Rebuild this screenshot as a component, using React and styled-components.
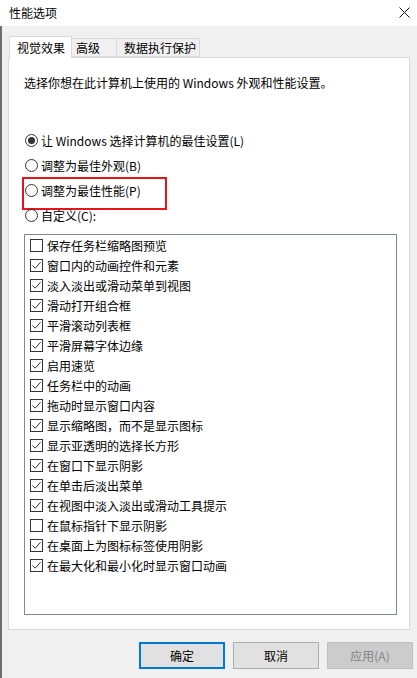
import React from "react"
import styled, { createGlobalStyle, css } from "styled-components"

const GlobalStyle = createGlobalStyle`
  html, body {
    margin: 0;
    padding: 0;
    background: #f0f0f0;
  }
  body {
    font-family: "Noto Sans CJK SC", "Noto Sans", sans-serif;
    font-size: 12px;
    color: #000;
  }
  * {
    box-sizing: border-box;
  }
`

const Window = styled.div`
  width: 417px;
  height: 678px;
  display: flex;
  flex-direction: column;
  background: #f0f0f0;
  overflow: hidden;
`

const TitleBar = styled.div`
  height: 26px;
  flex: none;
  background: #fff;
  display: flex;
  align-items: center;
  justify-content: space-between;
  padding: 0 7px 2px 9px;
  font-size: 12px;
`

const Body = styled.div`
  flex: 1;
  border-left: 2px solid #6e6e6e;
  padding: 10px 0 0 6px;
  display: flex;
  flex-direction: column;
`

const TabStrip = styled.div`
  display: flex;
  align-items: flex-end;
  height: 21px;
  padding-left: 1px;
  position: relative;
  z-index: 1;
`

const Tab = styled.div`
  height: ${(p) => (p.$active ? "22px" : "19px")};
  width: ${(p) => p.$width}px;
  margin-bottom: ${(p) => (p.$active ? "-1px" : "0")};
  display: flex;
  align-items: center;
  padding-left: ${(p) => p.$pad}px;
  padding-bottom: 1px;
  border: 1px solid #d9d9d9;
  border-bottom: ${(p) => (p.$active ? "none" : "1px solid #d9d9d9")};
  border-left: ${(p) => (p.$first ? "1px solid #d9d9d9" : "none")};
  background: ${(p) => (p.$active ? "#fff" : "#f0f0f0")};
  font-size: 12px;
  white-space: nowrap;
`

const Panel = styled.div`
  width: 402px;
  height: 573px;
  background: #fff;
  border: 1px solid #d9d9d9;
  padding: 16px 0 0 15px;
  display: flex;
  flex-direction: column;
`

const Intro = styled.p`
  margin: 0;
  line-height: 17px;
`

const RadioGroup = styled.div`
  margin-top: 37px;
  display: flex;
  flex-direction: column;
`

const RadioRow = styled.label`
  position: relative;
  height: 25px;
  display: flex;
  align-items: center;
  gap: 3px;
  padding-left: 1px;
  ${(p) =>
    p.$highlight &&
    css`
      &::after {
        content: "";
        position: absolute;
        left: -2px;
        top: -1px;
        width: 141px;
        height: 29px;
        border: 2px solid #e8141b;
        pointer-events: none;
      }
    `}
`

const RadioDot = styled.span`
  width: 13px;
  height: 13px;
  border-radius: 50%;
  border: 1px solid #333;
  display: flex;
  align-items: center;
  justify-content: center;
  flex: none;
  &::after {
    content: "";
    width: 7px;
    height: 7px;
    border-radius: 50%;
    background: ${(p) => (p.$checked ? "#333" : "transparent")};
  }
`

const ListBox = styled.div`
  margin-top: 6px;
  width: 373px;
  height: 381px;
  border: 1px solid #828790;
  padding: 0 0 0 5px;
  display: flex;
  flex-direction: column;
`

const CheckRow = styled.label`
  height: 20px;
  display: flex;
  align-items: center;
  gap: 4px;
`

const CheckBoxMark = styled.span`
  width: 13px;
  height: 13px;
  border: 1px solid #333;
  background: #fff;
  flex: none;
  display: flex;
  align-items: center;
  justify-content: center;
`

const ButtonRow = styled.div`
  display: flex;
  justify-content: flex-end;
  gap: 8px;
  padding-right: 4px;
  margin-top: 12px;
`

const Button = styled.button`
  width: 86px;
  height: 27px;
  font-family: inherit;
  font-size: 12px;
  padding: 0;
  background: ${(p) => (p.$disabled ? "#cccccc" : "#e1e1e1")};
  color: ${(p) => (p.$disabled ? "#838383" : "#000")};
  border: ${(p) =>
    p.$default ? "2px solid #0078d7" : p.$disabled ? "1px solid #bfbfbf" : "1px solid #adadad"};
`

const CloseIcon = () => (
  <svg width="11" height="11" viewBox="0 0 11 11">
    <path d="M0.5 0.5 L10.5 10.5 M10.5 0.5 L0.5 10.5" stroke="#111" strokeWidth="1" fill="none" />
  </svg>
)

const Check = () => (
  <svg width="11" height="11" viewBox="0 0 11 11">
    <path d="M1.5 5.5 L4.2 8.2 L9.6 2.2" stroke="#333" strokeWidth="1" fill="none" />
  </svg>
)

const effects = [
  ["保存任务栏缩略图预览", false],
  ["窗口内的动画控件和元素", true],
  ["淡入淡出或滑动菜单到视图", true],
  ["滑动打开组合框", true],
  ["平滑滚动列表框", true],
  ["平滑屏幕字体边缘", true],
  ["启用速览", true],
  ["任务栏中的动画", true],
  ["拖动时显示窗口内容", true],
  ["显示缩略图，而不是显示图标", true],
  ["显示亚透明的选择长方形", true],
  ["在窗口下显示阴影", true],
  ["在单击后淡出菜单", true],
  ["在视图中淡入淡出或滑动工具提示", true],
  ["在鼠标指针下显示阴影", false],
  ["在桌面上为图标标签使用阴影", true],
  ["在最大化和最小化时显示窗口动画", true],
]

const radios = [
  ["让 Windows 选择计算机的最佳设置(L)", true, false],
  ["调整为最佳外观(B)", false, false],
  ["调整为最佳性能(P)", false, true],
  ["自定义(C):", false, false],
]

export default function App() {
  return (
    <>
      <GlobalStyle />
      <Window>
        <TitleBar>
          <span>性能选项</span>
          <CloseIcon />
        </TitleBar>
        <Body>
          <TabStrip>
            <Tab $active $first $width={63} $pad={7}>视觉效果</Tab>
            <Tab $width={45} $pad={4}>高级</Tab>
            <Tab $width={83} $pad={7}>数据执行保护</Tab>
          </TabStrip>
          <Panel>
            <Intro>选择你想在此计算机上使用的 Windows 外观和性能设置。</Intro>
            <RadioGroup>
              {radios.map(([label, checked, hl]) => (
                <RadioRow key={label} $highlight={hl}>
                  <RadioDot $checked={checked} />
                  {label}
                </RadioRow>
              ))}
            </RadioGroup>
            <ListBox>
              {effects.map(([label, on]) => (
                <CheckRow key={label}>
                  <CheckBoxMark>{on && <Check />}</CheckBoxMark>
                  {label}
                </CheckRow>
              ))}
            </ListBox>
          </Panel>
          <ButtonRow>
            <Button $default>确定</Button>
            <Button>取消</Button>
            <Button $disabled>应用(A)</Button>
          </ButtonRow>
        </Body>
      </Window>
    </>
  )
}
